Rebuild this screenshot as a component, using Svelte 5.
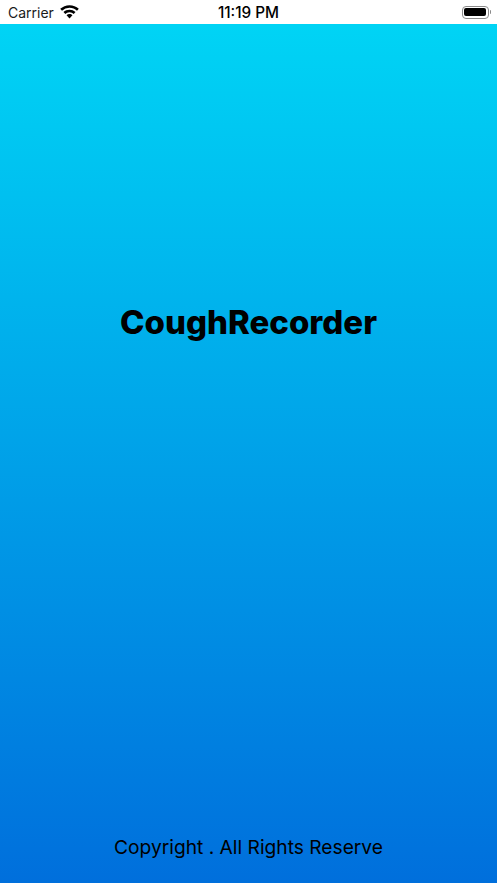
<script lang="ts">
  const title = "CoughRecorder";
  const copyright = "Copyright . All Rights Reserve";
</script>

<div class="screen">
  <header class="status-bar">
    <div class="left">
      <span class="carrier">Carrier</span>
      <svg class="wifi" width="19" height="14" viewBox="0 0 18 13" aria-hidden="true">
        <path d="M9 0C5.600 0 2.500 1.300.2 3.500l1.700 1.800A10.300 10.300 0 0 1 9 2.500c2.700 0 5.200 1.100 7.100 2.800l1.700-1.800A12.800 12.800 0 0 0 9 0z" />
        <path d="M9 4.300c-2.200 0-4.200.8-5.700 2.200L5 8.300A6 6 0 0 1 9 6.800a6 6 0 0 1 4 1.500l1.700-1.800A8.400 8.400 0 0 0 9 4.300z" />
        <path d="M9 8.500c-1.100 0-2.100.4-2.800 1.100L9 12.600l2.800-3C11.100 8.900 10.100 8.500 9 8.500z" />
      </svg>
    </div>
    <span class="time">11:19 PM</span>
    <div class="battery">
      <div class="shell"><div class="level"></div></div>
      <div class="nub"></div>
    </div>
  </header>

  <main class="splash">
    <h1>{title}</h1>
    <p>{copyright}</p>
  </main>
</div>

<style>
  :global(body) {
    margin: 0;
    background: #fff;
  }

  .screen {
    display: flex;
    flex-direction: column;
    height: 883px;
    overflow: hidden;
    font-family: Inter, "Liberation Sans", sans-serif;
    color: #000;
  }

  .status-bar {
    position: relative;
    display: flex;
    align-items: center;
    justify-content: space-between;
    height: 24px;
    padding: 0 6px 0 8px;
    background: #fff;
    flex: none;
    box-sizing: border-box;
  }

  .left {
    display: flex;
    align-items: center;
    gap: 6px;
  }

  .carrier {
    font-size: 14px;
    color: #1a1a1a;
  }

  .wifi {
    fill: #000;
    margin-top: -1px;
  }

  .time {
    position: absolute;
    left: 0;
    right: 0;
    text-align: center;
    font-size: 15.300px;
    font-weight: 500;
    pointer-events: none;
  }

  .battery {
    display: flex;
    align-items: center;
    gap: 1px;
  }

  .shell {
    width: 27px;
    height: 13px;
    box-sizing: border-box;
    border: 1px solid #8a8a8a;
    border-radius: 4px;
    padding: 1.500px;
  }

  .level {
    height: 100%;
    background: #000;
    border-radius: 2px;
  }

  .nub {
    width: 1.500px;
    height: 4px;
    background: #8a8a8a;
    border-radius: 0 1px 1px 0;
  }

  .splash {
    flex: 1;
    display: flex;
    flex-direction: column;
    align-items: center;
    background: linear-gradient(180deg, #00d4f5 0%, #006fdc 100%);
  }

  h1 {
    margin: 277px 0 0;
    font-size: 33px;
    line-height: 42px;
    font-weight: 800;
  }

  p {
    margin: auto 0 22px;
    font-size: 19.200px;
    line-height: 28px;
    font-weight: 400;
  }
</style>
